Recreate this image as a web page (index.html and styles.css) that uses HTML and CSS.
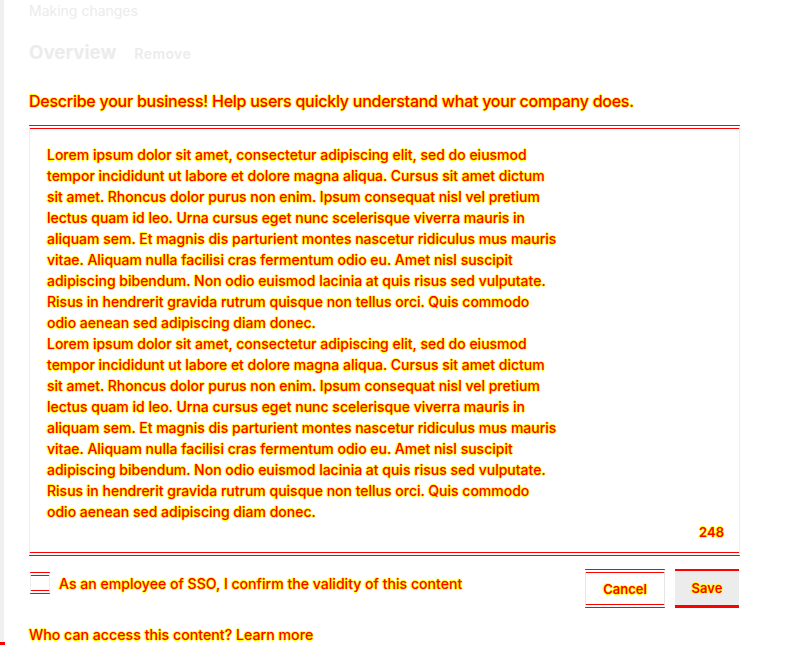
FILE: index.html
```html
<!DOCTYPE html>
<html lang="en">
<head>
<meta charset="utf-8">
<title>Making changes</title>
<link rel="stylesheet" href="styles.css">
</head>
<body>
<div class="rail"></div>
<div class="rail-mark"></div>
<main class="page">
  <div class="crumb">Making changes</div>
  <div class="title-row">
    <h1 class="title">Overview</h1>
    <span class="remove">Remove</span>
  </div>
  <p class="desc hl">Describe your business! Help users quickly understand what your company does.</p>
  <div class="editor">
    <div class="body hl">
      <span class="ln">Lorem ipsum dolor sit amet, consectetur adipiscing elit, sed do eiusmod</span>
      <span class="ln">tempor incididunt ut labore et dolore magna aliqua. Cursus sit amet dictum</span>
      <span class="ln">sit amet. Rhoncus dolor purus non enim. Ipsum consequat nisl vel pretium</span>
      <span class="ln">lectus quam id leo. Urna cursus eget nunc scelerisque viverra mauris in</span>
      <span class="ln">aliquam sem. Et magnis dis parturient montes nascetur ridiculus mus mauris</span>
      <span class="ln">vitae. Aliquam nulla facilisi cras fermentum odio eu. Amet nisl suscipit</span>
      <span class="ln">adipiscing bibendum. Non odio euismod lacinia at quis risus sed vulputate.</span>
      <span class="ln">Risus in hendrerit gravida rutrum quisque non tellus orci. Quis commodo</span>
      <span class="ln">odio aenean sed adipiscing diam donec.</span>
      <span class="ln">Lorem ipsum dolor sit amet, consectetur adipiscing elit, sed do eiusmod</span>
      <span class="ln">tempor incididunt ut labore et dolore magna aliqua. Cursus sit amet dictum</span>
      <span class="ln">sit amet. Rhoncus dolor purus non enim. Ipsum consequat nisl vel pretium</span>
      <span class="ln">lectus quam id leo. Urna cursus eget nunc scelerisque viverra mauris in</span>
      <span class="ln">aliquam sem. Et magnis dis parturient montes nascetur ridiculus mus mauris</span>
      <span class="ln">vitae. Aliquam nulla facilisi cras fermentum odio eu. Amet nisl suscipit</span>
      <span class="ln">adipiscing bibendum. Non odio euismod lacinia at quis risus sed vulputate.</span>
      <span class="ln">Risus in hendrerit gravida rutrum quisque non tellus orci. Quis commodo</span>
      <span class="ln">odio aenean sed adipiscing diam donec.</span>
    </div>
    <div class="count hl">248</div>
  </div>
  <div class="footer">
    <label class="confirm">
      <span class="box"></span>
      <span class="hl">As an employee of SSO, I confirm the validity of this content</span>
    </label>
    <div class="actions">
      <button class="btn cancel"><span class="hl">Cancel</span></button>
      <button class="btn save"><span class="hl">Save</span></button>
    </div>
  </div>
  <p class="access hl">Who can access this content? Learn more</p>
</main>
</body>
</html>
```

FILE: styles.css
```css
* { box-sizing: border-box; }
html, body { margin: 0; padding: 0; background: #fff; }
body {
  font-family: Inter, "Noto Sans", sans-serif;
  width: 800px;
  height: 645px;
  overflow: hidden;
  position: relative;
}
.rail {
  position: absolute;
  left: 0; top: 0;
  width: 4px; height: 645px;
  background: #f0f0f0;
}
.rail-mark {
  position: absolute;
  left: 0; bottom: 0;
  width: 5px; height: 3px;
  background: #f00;
}
.hl {
  color: #f00;
  text-shadow: 1px 0 #ff0, -1px 0 #ff0, 0 1px #ff0, 0 -1px #ff0;
}
.page {
  padding: 1px 60px 0 29px;
}
.crumb {
  font-size: 14px;
  line-height: 20px;
  color: #ececec;
}
.title-row {
  margin-top: 20px;
  display: flex;
  align-items: baseline;
  gap: 18px;
}
.title {
  margin: 0;
  font-size: 18.7px;
  line-height: 24px;
  font-weight: 700;
  color: #ececec;
}
.remove {
  font-size: 14px;
  font-weight: 600;
  letter-spacing: 0.4px;
  color: #ececec;
}
.desc {
  margin: 27px 0 0;
  font-size: 16px;
  line-height: 18px;
  font-weight: 500;
  letter-spacing: -0.25px;
  white-space: nowrap;
}
.editor {
  margin-top: 15px;
  width: 711px;
  border-top: 4px double #f00;
  border-bottom: 4px double #f00;
  border-left: 1px solid #eee;
  border-right: 1px solid #eee;
  padding: 15px 15px 9px 17px;
}
.body {
  font-size: 14px;
  line-height: 21px;
  font-weight: 500;
}
.ln { display: block; white-space: nowrap; }
.count {
  text-align: right;
  font-size: 13px;
  line-height: 21px;
  font-weight: 600;
}
.footer {
  margin-top: 13px;
  display: flex;
  justify-content: space-between;
  align-items: flex-start;
  width: 711px;
}
.confirm {
  display: flex;
  align-items: center;
  gap: 9px;
  margin-top: 3px;
  font-size: 14.1px;
  font-weight: 500;
}
.box {
  width: 20px;
  height: 22px;
  margin-left: 1px;
  border-top: 4px double #f00;
  border-bottom: 4px double #f00;
  border-left: 1px solid #eee;
  border-right: 1px solid #eee;
}
.actions {
  display: flex;
  gap: 10px;
  margin-right: 1px;
}
.btn {
  height: 39px;
  font-family: inherit;
  font-size: 13px;
  font-weight: 600;
  padding: 0;
  background: #fff;
}
.cancel {
  width: 80px;
  border-top: 4px double #f00;
  border-bottom: 4px double #f00;
  border-left: 1px solid #e6e6e6;
  border-right: 1px solid #e6e6e6;
}
.save {
  width: 64px;
  background: #ececec;
  border: 0;
  border-top: 2px solid #f00;
  border-bottom: 3px solid #f00;
}
.access {
  margin: 17px 0 0;
  font-size: 14.2px;
  line-height: 20px;
  font-weight: 500;
}
```
